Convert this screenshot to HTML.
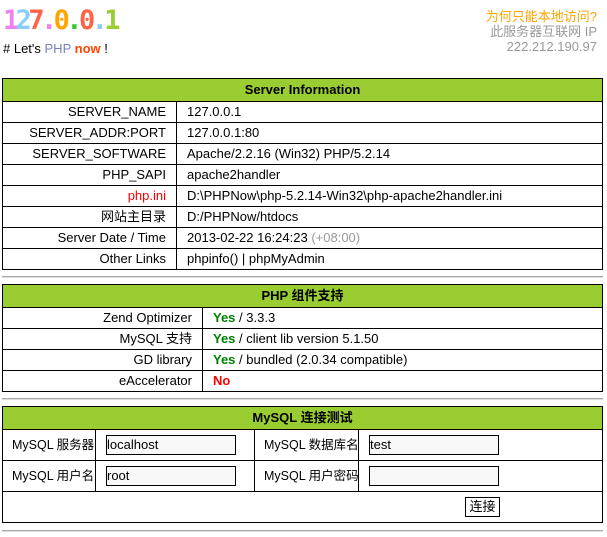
<!DOCTYPE html>
<html><head><meta charset="utf-8"><style>
body{margin:0;width:607px;height:537px;background:#fff;font-family:"Liberation Sans","Noto Sans CJK SC",sans-serif;font-size:13px;color:#000;position:relative;overflow:hidden}
.a{position:absolute}
table{position:absolute;left:2px;width:601px;border-collapse:collapse;table-layout:fixed}
td,th{border:1px solid #000;padding:0;height:20px;line-height:20px;white-space:nowrap;overflow:hidden}
th{background:#9acd32;font-weight:bold;height:22px}
.r{text-align:right;padding-right:10px}
.l{padding-left:10px}
.y{color:#008000;font-weight:bold}
.hr{position:absolute;left:2px;width:601px;height:1px;background:#aaa;border-bottom:1px solid #ddd}
input{box-sizing:border-box;width:130px;height:20px;border:1px solid #000;background:#f8f8f8;font:13px "Liberation Sans",sans-serif;padding:0}
</style></head><body>
<div class="a" style="left:3px;top:4px;font:bold 27px 'DejaVu Sans Mono',monospace;letter-spacing:-3.6px;line-height:34px"><span style="color:#ee82ee">1</span><span style="color:#87cefa">2</span><span style="color:#ff6347">7</span><span style="color:#ee82ee">.</span><span style="color:#ffa500">0</span><span style="color:#32cd32">.</span><span style="color:#ff6347">0</span><span style="color:#87cefa">.</span><span style="color:#9acd32">1</span></div>
<div class="a" style="left:3px;top:41px;line-height:16px"># Let's <span style="color:#7b7fbe">PHP</span> <b style="color:#ff4500">now</b> !</div>
<div class="a" style="right:10px;top:9px;text-align:right;line-height:15px;color:#999"><span style="color:#ffa500">为何只能本地访问?</span><br>此服务器互联网 IP<br>222.212.190.97</div>

<table style="top:78px">
<col style="width:174px"><col>
<tr><th colspan="2">Server Information</th></tr>
<tr><td class="r">SERVER_NAME</td><td class="l">127.0.0.1</td></tr>
<tr><td class="r">SERVER_ADDR:PORT</td><td class="l">127.0.0.1:80</td></tr>
<tr><td class="r">SERVER_SOFTWARE</td><td class="l">Apache/2.2.16 (Win32) PHP/5.2.14</td></tr>
<tr><td class="r">PHP_SAPI</td><td class="l">apache2handler</td></tr>
<tr><td class="r" style="color:#f00">php.ini</td><td class="l">D:\PHPNow\php-5.2.14-Win32\php-apache2handler.ini</td></tr>
<tr><td class="r">网站主目录</td><td class="l">D:/PHPNow/htdocs</td></tr>
<tr><td class="r">Server Date / Time</td><td class="l">2013-02-22 16:24:23 <span style="color:#999">(+08:00)</span></td></tr>
<tr><td class="r">Other Links</td><td class="l">phpinfo() | phpMyAdmin</td></tr>
</table>
<div class="hr" style="top:276px"></div>
<table style="top:284px">
<col style="width:200px"><col>
<tr><th colspan="2">PHP 组件支持</th></tr>
<tr><td class="r">Zend Optimizer</td><td class="l"><span class="y">Yes</span> / 3.3.3</td></tr>
<tr><td class="r">MySQL 支持</td><td class="l"><span class="y">Yes</span> / client lib version 5.1.50</td></tr>
<tr><td class="r">GD library</td><td class="l"><span class="y">Yes</span> / bundled (2.0.34 compatible)</td></tr>
<tr><td class="r">eAccelerator</td><td class="l"><b style="color:#f00">No</b></td></tr>
</table>
<div class="hr" style="top:398px"></div>
<table style="top:406px">
<col style="width:93px"><col style="width:159px"><col style="width:104px"><col>
<tr><th colspan="4">MySQL 连接测试</th></tr>
<tr><td style="height:30px;padding-left:9px;font-size:12.5px">MySQL 服务器</td><td style="padding-left:10px"><input value="localhost"></td><td style="padding-left:9px;font-size:12.5px">MySQL 数据库名</td><td style="padding-left:10px"><input value="test"></td></tr>
<tr><td style="height:30px;padding-left:9px;font-size:12.5px">MySQL 用户名</td><td style="padding-left:10px"><input value="root"></td><td style="padding-left:9px;font-size:12.5px">MySQL 用户密码</td><td style="padding-left:10px"><input value=""></td></tr>
<tr><td colspan="4" style="height:30px;text-align:right;padding-right:102px"><span style="display:inline-block;border:1px solid #000;width:33px;height:18px;line-height:18px;text-align:center;vertical-align:middle">连接</span></td></tr>
</table>
<div class="hr" style="top:530px"></div>
</body></html>
